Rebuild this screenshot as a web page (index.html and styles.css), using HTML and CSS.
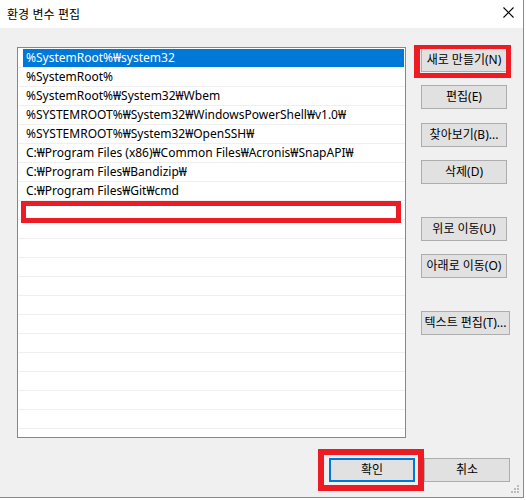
FILE: index.html
```html
<!DOCTYPE html>
<html lang="ko">
<head>
<meta charset="utf-8">
<title>환경 변수 편집</title>
<link rel="stylesheet" href="styles.css">
</head>
<body>
<div class="window">
  <div class="titlebar">
    <span class="title">환경 변수 편집</span>
    <svg class="close" width="11" height="11" viewBox="0 0 11 11"><path d="M0.5 0.5 L10.5 10.5 M10.5 0.5 L0.5 10.5" stroke="#000" stroke-width="1.1" fill="none"/></svg>
  </div>
  <div class="client">
    <div class="main">
      <div class="list">
        <div class="row sel"><span class="label">%SystemRoot%₩system32</span></div>
        <div class="row"><span class="label">%SystemRoot%</span></div>
        <div class="row"><span class="label">%SystemRoot%₩System32₩Wbem</span></div>
        <div class="row"><span class="label">%SYSTEMROOT%₩System32₩WindowsPowerShell₩v1.0₩</span></div>
        <div class="row"><span class="label">%SYSTEMROOT%₩System32₩OpenSSH₩</span></div>
        <div class="row"><span class="label">C:₩Program Files (x86)₩Common Files₩Acronis₩SnapAPI₩</span></div>
        <div class="row"><span class="label">C:₩Program Files₩Bandizip₩</span></div>
        <div class="row"><span class="label">C:₩Program Files₩Git₩cmd</span></div>
        <div class="row edit"><span class="label"></span><span class="mark mark-edit"></span></div>
        <div class="row"><span class="label"></span></div>
        <div class="row"><span class="label"></span></div>
        <div class="row"><span class="label"></span></div>
        <div class="row"><span class="label"></span></div>
        <div class="row"><span class="label"></span></div>
        <div class="row"><span class="label"></span></div>
        <div class="row"><span class="label"></span></div>
        <div class="row"><span class="label"></span></div>
        <div class="row"><span class="label"></span></div>
        <div class="row"><span class="label"></span></div>
        <div class="row"><span class="label"></span></div>
      </div>
      <div class="side">
        <div class="marked"><button class="btn">새로 만들기(N)</button><span class="mark mark-new"></span></div>
        <button class="btn gap-s">편집(E)</button>
        <button class="btn gap-m">찾아보기(B)...</button>
        <button class="btn gap-s">삭제(D)</button>
        <button class="btn gap-l">위로 이동(U)</button>
        <button class="btn gap-s">아래로 이동(O)</button>
        <button class="btn wide gap-l">텍스트 편집(T)...</button>
      </div>
    </div>
    <div class="footer">
      <div class="marked"><button class="btn default">확인</button><span class="mark mark-ok"></span></div>
      <button class="btn">취소</button>
    </div>
    <svg class="grip" width="9" height="9" viewBox="0 0 9 9">
      <rect x="6" y="0" width="2" height="2" fill="#bcbcbc"/>
      <rect x="3" y="3" width="2" height="2" fill="#bcbcbc"/>
      <rect x="6" y="3" width="2" height="2" fill="#bcbcbc"/>
      <rect x="0" y="6" width="2" height="2" fill="#bcbcbc"/>
      <rect x="3" y="6" width="2" height="2" fill="#bcbcbc"/>
      <rect x="6" y="6" width="2" height="2" fill="#bcbcbc"/>
    </svg>
  </div>
</div>
</body>
</html>
```
FILE: styles.css
```css
html, body {
  margin: 0;
  padding: 0;
  background: #ffffff;
}
body {
  font-family: "Noto Sans", "Noto Sans CJK KR", sans-serif;
  font-size: 12px;
  color: #000;
}
.window {
  width: 523px;
  height: 497px;
  border-right: 1px solid #8a8a8a;
  border-bottom: 1px solid #8a8a8a;
  display: flex;
  flex-direction: column;
  position: relative;
}
.titlebar {
  height: 28px;
  background: #ffffff;
  display: flex;
  align-items: center;
  justify-content: space-between;
  padding: 0 9px 0 7px;
  box-sizing: border-box;
}
.title {
  font-family: "Noto Sans CJK KR", sans-serif;
  font-size: 12px;
  line-height: 16px;
  margin-top: -1px;
}
.close {
  display: block;
  margin-top: -4px;
}
.client {
  flex: 1;
  background: #f0f0f0;
  padding: 19px 13px 0 17px;
  position: relative;
}
.main {
  display: flex;
  align-items: flex-start;
}
.list {
  width: 390px;
  height: 388px;
  border: 1px solid #828790;
  background: #ffffff;
  padding-top: 1px;
  box-sizing: content-box;
  overflow: hidden;
}
.row {
  height: 18px;
  border-bottom: 1px solid #efefef;
  padding: 0 1px 0 5px;
  position: relative;
}
.label {
  display: block;
  height: 18px;
  line-height: 18px;
  padding-left: 3px;
  white-space: nowrap;
}
.row.sel .label {
  background: #0078d7;
  color: #ffffff;
}
.side {
  margin-left: 15px;
  padding-top: 1px;
  display: flex;
  flex-direction: column;
  align-items: flex-start;
}
.btn {
  width: 86px;
  height: 24px;
  margin: 0;
  padding: 0;
  border: 1px solid #adadad;
  background: #e1e1e1;
  font-family: "Noto Sans", "Noto Sans CJK KR", sans-serif;
  font-size: 12px;
  color: #000;
  line-height: 20px;
  white-space: nowrap;
  box-sizing: border-box;
}
.btn.wide {
  width: 89px;
}
.gap-s { margin-top: 13px; }
.gap-m { margin-top: 14px; }
.gap-l { margin-top: 33px; }
.btn.default {
  border: 2px solid #0078d7;
}
.marked {
  position: relative;
  display: flex;
}
.mark {
  position: absolute;
  border: 5px solid #ed1c24;
  pointer-events: none;
}
.mark-new {
  left: -7px;
  top: -3px;
  right: -4px;
  bottom: -6px;
  border-top-width: 4px;
  border-left-width: 6px;
}
.mark-edit {
  left: 3px;
  top: 0;
  width: 380px;
  height: 22px;
  box-sizing: border-box;
}
.mark-ok {
  left: -11px;
  top: -9px;
  right: -9px;
  bottom: -9px;
  border-width: 6px;
}
.footer {
  margin-top: 20px;
  display: flex;
  justify-content: flex-end;
  gap: 9px;
}
.grip {
  position: absolute;
  right: 3px;
  bottom: 3px;
  display: block;
}
```
